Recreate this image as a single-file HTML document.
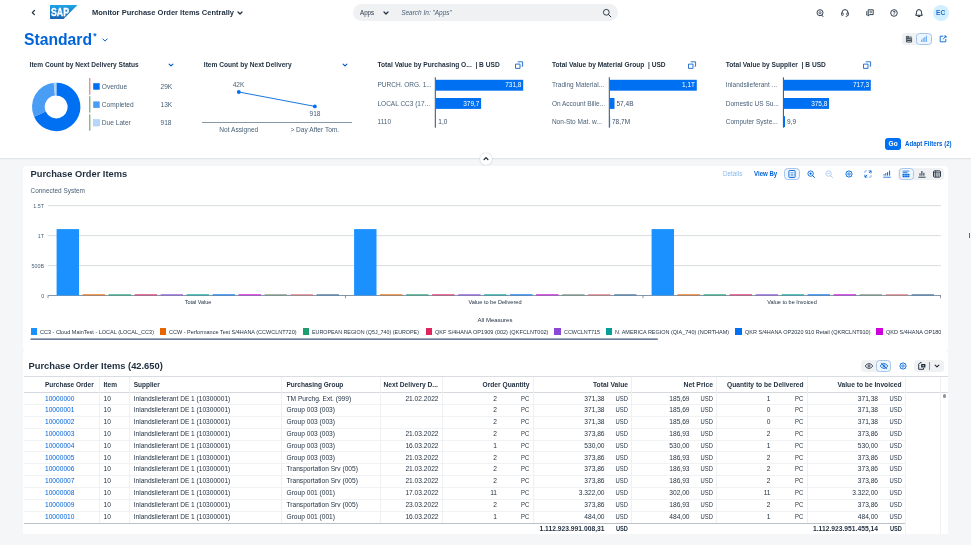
<!DOCTYPE html>
<html lang="en"><head><meta charset="utf-8"><title>Monitor Purchase Order Items Centrally</title>
<style>
*{box-sizing:border-box;margin:0;padding:0}
html,body{width:971px;height:545px;overflow:hidden;background:#f5f6f7;font-family:"Liberation Sans",sans-serif;color:#1d2d3e}
body{position:relative}
.a{position:absolute;white-space:nowrap;line-height:1}
.b{font-weight:bold}
.t{position:absolute;white-space:nowrap;line-height:10px;height:10px;font-size:6.55px}
.r{text-align:right}
.c{text-align:center}
.lnk{color:#0064d9}
.gry{color:#4a6178}
svg{position:absolute;overflow:visible}
.vl{position:absolute;width:1px;background:#e5e5e5}
.hl{position:absolute;height:1px;background:#e5e5e5}
#root{position:absolute;left:0;top:0;width:971px;height:545px;overflow:hidden;will-change:transform}
</style></head><body><div id="root">

<div class="a" style="left:0;top:0;width:971px;height:158px;background:#fff"></div>
<div class="a" style="left:0;top:158px;width:971px;height:1px;background:#e3e6e9"></div>
<div class="a" style="left:0;top:159px;width:971px;height:1px;background:#eef0f2"></div>
<svg style="left:29px;top:8px" width="8" height="9" viewBox="0 0 8 9"><path d="M5.4 2.5L3.3 4.6L5.4 6.7" fill="none" stroke="#1d2d3e" stroke-width="1.2" stroke-linecap="round" stroke-linejoin="round"/></svg>
<div class="a" style="left:49.5px;top:5px;width:28px;height:14px;background:linear-gradient(#1ea4e8,#1a62b3);clip-path:polygon(0 0,100% 0,50% 100%,0 100%)"><div class="a b" style="left:1px;top:0px;height:14px;line-height:14px;font-size:11px;color:#fff;-webkit-text-stroke:0.3px #fff;transform:scaleX(0.796);transform-origin:0 50%">SAP</div></div>
<div class="a b" style="left:92px;top:7.10px;height:12px;line-height:12px;font-size:7.52px;">Monitor Purchase Order Items Centrally</div>
<svg style="left:236px;top:8.9px" width="8" height="8" viewBox="-4 -4 8 8"><path d="M-2.0 -1.0L0 1.0L2.0 -1.0" fill="none" stroke="#1d2d3e" stroke-width="1.2" stroke-linecap="round" stroke-linejoin="round"/></svg>
<div class="a" style="left:353px;top:3.6px;width:265px;height:17.6px;border-radius:9px;background:#eff1f2"></div>
<div class="a " style="left:360.4px;top:6.90px;height:12px;line-height:12px;font-size:6.90px;transform:scaleX(0.903);transform-origin:0 50%;color:#1d2d3e">Apps</div>
<svg style="left:381.7px;top:8.7px" width="8" height="8" viewBox="-4 -4 8 8"><path d="M-2.0 -1.0L0 1.0L2.0 -1.0" fill="none" stroke="#1d2d3e" stroke-width="1.2" stroke-linecap="round" stroke-linejoin="round"/></svg>
<div class="a " style="left:401.2px;top:6.90px;height:12px;line-height:12px;font-size:6.47px;font-style:italic;color:#4a6178">Search In: "Apps"</div>
<svg style="left:602px;top:7.5px" width="10" height="10" viewBox="0 0 10 10"><circle cx="4.3" cy="4.3" r="2.9" fill="none" stroke="#1d2d3e" stroke-width="0.9"/><path d="M6.5 6.5L8.8 8.8" stroke="#1d2d3e" stroke-width="1" stroke-linecap="round"/></svg>
<svg style="left:815.4px;top:7.699999999999999px" width="10" height="10" viewBox="-5 -5 10 10"><circle cx="0" cy="-0.3" r="3" fill="none" stroke="#1d2d3e" stroke-width="0.9"/><circle cx="0" cy="-0.3" r="1.1" fill="none" stroke="#1d2d3e" stroke-width="0.7"/><path d="M1.8 2.2L3 3.6" stroke="#1d2d3e" stroke-width="0.9" stroke-linecap="round"/></svg>
<svg style="left:840.0px;top:7.699999999999999px" width="10" height="10" viewBox="-5 -5 10 10"><path d="M-3 0.6V-0.4A3 3 0 0 1 3 -0.4V0.6" fill="none" stroke="#1d2d3e" stroke-width="0.9"/><rect x="-3.5" y="-0.2" width="1.7" height="2.6" rx="0.6" fill="none" stroke="#1d2d3e" stroke-width="0.8"/><rect x="1.8" y="-0.2" width="1.7" height="2.6" rx="0.6" fill="none" stroke="#1d2d3e" stroke-width="0.8"/><path d="M2.8 2.4Q2.6 3.6 0.6 3.6" fill="none" stroke="#1d2d3e" stroke-width="0.7"/></svg>
<svg style="left:864.8px;top:7.699999999999999px" width="10" height="10" viewBox="-5 -5 10 10"><path d="M-1.8 -3.2H3.2V1.6H-0.2L-1.8 3V-3.2Z" fill="none" stroke="#1d2d3e" stroke-width="0.9" stroke-linejoin="round"/><path d="M-3.3 -1.8V2.2H-2.6" fill="none" stroke="#1d2d3e" stroke-width="0.8"/><circle cx="0.7" cy="-1" r="0.9" fill="none" stroke="#1d2d3e" stroke-width="0.6"/></svg>
<svg style="left:889.4px;top:7.699999999999999px" width="10" height="10" viewBox="-5 -5 10 10"><circle cx="0" cy="0" r="3.3" fill="none" stroke="#1d2d3e" stroke-width="0.9"/><text x="0" y="1.9" text-anchor="middle" font-family="Liberation Sans, sans-serif" font-weight="bold" font-size="5.2" fill="#1d2d3e">?</text></svg>
<svg style="left:914.0px;top:7.5px" width="10" height="10" viewBox="-5 -5 10 10"><path d="M-3.3 2.3H3.3C2.6 1.5 2.5 0.6 2.5 -0.8A2.5 2.6 0 0 0 -2.5 -0.8C-2.5 0.6 -2.6 1.5 -3.3 2.3Z" fill="none" stroke="#1d2d3e" stroke-width="1" stroke-linejoin="round"/><path d="M-0.9 3.5H0.9" stroke="#1d2d3e" stroke-width="0.9" stroke-linecap="round"/></svg>
<div class="a b" style="left:932.8px;top:4.8px;width:15.8px;height:15.8px;border-radius:50%;background:#d1efff;color:#1f6fd0;font-size:6.6px;line-height:15.8px;text-align:center">EC</div>
<div class="a b" style="left:24px;top:33.50px;height:12px;line-height:12px;font-size:15.69px;color:#0064d9;height:20px;line-height:20px;top:30.4px">Standard</div>
<div class="a b" style="left:93.3px;top:32.2px;font-size:8.5px;color:#0064d9">*</div>
<svg style="left:101.3px;top:36px" width="8" height="8" viewBox="-4 -4 8 8"><path d="M-2.2 -1.1L0 1.1L2.2 -1.1" fill="none" stroke="#0064d9" stroke-width="1" stroke-linecap="round" stroke-linejoin="round"/></svg>
<div class="a" style="left:901.8px;top:32.6px;width:15px;height:12.2px;border-radius:3px 0 0 3px;background:#eff1f2"></div>
<div class="a" style="left:916.2px;top:32.6px;width:15.6px;height:12.2px;border-radius:3.5px;background:#edf5ff;border:1px solid #a3c3ea"></div>
<svg style="left:904.0px;top:33.7px" width="10" height="10" viewBox="-5 -5 10 10"><path d="M-2.6 -2.6H-0.4V-1.2H-2.6ZM-2.6 -0.6H2.6V0.9H-2.6ZM-2.6 1.5H2.6V3H-2.6Z" fill="none" stroke="#1d2d3e" stroke-width="0.8"/><path d="M0.2 -1.9H2.8" stroke="#1d2d3e" stroke-width="0.8"/></svg>
<svg style="left:919.0px;top:33.9px" width="10" height="10" viewBox="-5 -5 10 10"><path d="M-2.4 2.6V1M-0.8 2.6V-0.6M0.8 2.6V-1.6M2.4 2.6V-2.8" stroke="#5aa0ee" stroke-width="0.9" stroke-linecap="round"/></svg>
<svg style="left:937.5px;top:33.6px" width="10" height="10" viewBox="-5 -5 10 10"><path d="M0.4 -2.8H-2.8V2.8H2.8V0" fill="none" stroke="#0064d9" stroke-width="0.9" stroke-linejoin="round"/><path d="M0 0.4L2.9 -2.9M1.2 -3H3V-1.2" fill="none" stroke="#0064d9" stroke-width="0.9" stroke-linejoin="round"/></svg>
<div class="a b" style="left:29.6px;top:58.50px;height:12px;line-height:12px;font-size:6.57px;">Item Count by Next Delivery Status</div>
<svg style="left:167px;top:60.5px" width="8" height="8" viewBox="-4 -4 8 8"><path d="M-1.9 -0.95L0 0.95L1.9 -0.95" fill="none" stroke="#0057c2" stroke-width="1.1" stroke-linecap="round" stroke-linejoin="round"/></svg>
<div class="a b" style="left:203.8px;top:58.50px;height:12px;line-height:12px;font-size:6.62px;">Item Count by Next Delivery</div>
<svg style="left:341px;top:60.5px" width="8" height="8" viewBox="-4 -4 8 8"><path d="M-1.9 -0.95L0 0.95L1.9 -0.95" fill="none" stroke="#0057c2" stroke-width="1.1" stroke-linecap="round" stroke-linejoin="round"/></svg>
<svg style="left:0;top:0" width="971" height="160" viewBox="0 0 971 160">
<path d="M56.20 82.70A24.2 24.2 0 1 1 34.09 116.74L45.69 111.58A11.5 11.5 0 1 0 56.20 95.40Z" fill="#0070f2"/>
<path d="M34.09 116.74A24.2 24.2 0 0 1 53.67 82.83L55.00 95.46A11.5 11.5 0 0 0 45.69 111.58Z" fill="#4a9df5"/>
<path d="M53.67 82.83A24.2 24.2 0 0 1 56.20 82.70L56.20 95.40A11.5 11.5 0 0 0 55.00 95.46Z" fill="#a6cffb"/>
<path d="M56.2 95.4V82.7" stroke="#fff" stroke-width="0.4"/>
<rect x="89.3" y="78" width="1" height="16.8" fill="#e2636f"/>
<rect x="89.3" y="96.2" width="1" height="16.4" fill="#4f9d59"/>
<rect x="89.3" y="114.3" width="1" height="16.4" fill="#4f9d59"/>
<rect x="93.2" y="83.2" width="6.5" height="6.5" fill="#0070f2"/>
<rect x="93.2" y="101.4" width="6.5" height="6.5" fill="#4a9df5"/>
<rect x="93.2" y="119.5" width="6.5" height="6.5" fill="#b5d7fb" stroke="#8fc2f7" stroke-width="0.4"/>
<path d="M238.8 92L314.8 106.4" stroke="#0064d9" stroke-width="0.9" fill="none"/>
<circle cx="238.8" cy="92" r="1.9" fill="#0070f2"/><circle cx="314.8" cy="106.4" r="1.9" fill="#0070f2"/>
<rect x="202" y="122.2" width="150" height="0.8" fill="#6a7d91"/>
<rect x="434.8" y="77.3" width="1" height="50.4" fill="#3b4f66"/>
<rect x="435.8" y="79.8" width="87.4" height="10.9" fill="#0070f2"/>
<rect x="435.8" y="98" width="45.3" height="10.9" fill="#0070f2"/>
<rect x="435.8" y="116.2" width="0.2" height="10.9" fill="#0070f2"/>
<rect x="608.8" y="77.3" width="1" height="50.4" fill="#3b4f66"/>
<rect x="609.8" y="79.8" width="87.0" height="10.9" fill="#0070f2"/>
<rect x="609.8" y="98" width="4.7" height="10.9" fill="#0070f2"/>
<rect x="609.8" y="116.2" width="0.3" height="10.9" fill="#0070f2"/>
<rect x="782.9" y="77.3" width="1" height="50.4" fill="#3b4f66"/>
<rect x="783.9" y="79.8" width="86.9" height="10.9" fill="#0070f2"/>
<rect x="783.9" y="98" width="45.1" height="10.9" fill="#0070f2"/>
<rect x="783.9" y="116.2" width="1.1" height="10.9" fill="#0070f2"/>
</svg>
<div class="a gry" style="left:101.8px;top:80.60px;height:12px;line-height:12px;font-size:6.60px;">Overdue</div>
<div class="a gry" style="left:160.5px;top:80.60px;height:12px;line-height:12px;font-size:6.60px;">29K</div>
<div class="a gry" style="left:101.8px;top:98.70px;height:12px;line-height:12px;font-size:6.60px;">Completed</div>
<div class="a gry" style="left:160.5px;top:98.70px;height:12px;line-height:12px;font-size:6.60px;">13K</div>
<div class="a gry" style="left:101.8px;top:116.80px;height:12px;line-height:12px;font-size:6.60px;">Due Later</div>
<div class="a gry" style="left:160.5px;top:116.80px;height:12px;line-height:12px;font-size:6.60px;">918</div>
<div class="a gry" style="left:138.5px;width:200px;top:78.70px;height:12px;line-height:12px;font-size:6.60px;text-align:center;">42K</div>
<div class="a gry" style="left:215px;width:200px;top:108.40px;height:12px;line-height:12px;font-size:6.60px;text-align:center;">918</div>
<div class="a gry" style="left:138.8px;width:200px;top:123.60px;height:12px;line-height:12px;font-size:6.60px;text-align:center;">Not Assigned</div>
<div class="a gry" style="left:214.8px;width:200px;top:123.60px;height:12px;line-height:12px;font-size:6.60px;text-align:center;">&gt; Day After Tom.</div>
<div class="a b" style="left:377.5px;top:58.50px;height:12px;line-height:12px;font-size:6.62px;">Total Value by Purchasing O...&nbsp; | B USD</div>
<svg style="left:513.6px;top:59.599999999999994px" width="10" height="10" viewBox="-5 -5 10 10"><path d="M-3.5 -0.9H1V3.4H-3.5Z" fill="none" stroke="#0a5cc4" stroke-width="0.85" stroke-linejoin="round"/><path d="M-1.3 -3.2H3.6V1.2H2.6" fill="none" stroke="#0a5cc4" stroke-width="0.85" stroke-linejoin="round"/></svg>
<div class="a b" style="left:551.9px;top:58.50px;height:12px;line-height:12px;font-size:6.62px;">Total Value by Material Group&nbsp; | USD</div>
<svg style="left:687.0px;top:59.599999999999994px" width="10" height="10" viewBox="-5 -5 10 10"><path d="M-3.5 -0.9H1V3.4H-3.5Z" fill="none" stroke="#0a5cc4" stroke-width="0.85" stroke-linejoin="round"/><path d="M-1.3 -3.2H3.6V1.2H2.6" fill="none" stroke="#0a5cc4" stroke-width="0.85" stroke-linejoin="round"/></svg>
<div class="a b" style="left:725.7px;top:58.50px;height:12px;line-height:12px;font-size:6.62px;">Total Value by Supplier&nbsp; | B USD</div>
<svg style="left:861.6px;top:59.599999999999994px" width="10" height="10" viewBox="-5 -5 10 10"><path d="M-3.5 -0.9H1V3.4H-3.5Z" fill="none" stroke="#0a5cc4" stroke-width="0.85" stroke-linejoin="round"/><path d="M-1.3 -3.2H3.6V1.2H2.6" fill="none" stroke="#0a5cc4" stroke-width="0.85" stroke-linejoin="round"/></svg>
<div class="a gry" style="left:377.5px;top:79.30px;height:12px;line-height:12px;font-size:6.50px;">PURCH. ORG. 1...</div>
<div class="a gry" style="left:377.5px;top:97.50px;height:12px;line-height:12px;font-size:6.50px;">LOCAL CC3 (17...</div>
<div class="a gry" style="left:377.5px;top:115.70px;height:12px;line-height:12px;font-size:6.50px;">1110</div>
<div class="a gry" style="left:551.9px;top:79.30px;height:12px;line-height:12px;font-size:6.50px;">Trading Material...</div>
<div class="a gry" style="left:551.9px;top:97.50px;height:12px;line-height:12px;font-size:6.50px;">On Account Bille...</div>
<div class="a gry" style="left:551.9px;top:115.70px;height:12px;line-height:12px;font-size:6.50px;">Non-Sto Mat. w...</div>
<div class="a gry" style="left:725.7px;top:79.30px;height:12px;line-height:12px;font-size:6.50px;">Inlandslieferant ...</div>
<div class="a gry" style="left:725.7px;top:97.50px;height:12px;line-height:12px;font-size:6.50px;">Domestic US Su...</div>
<div class="a gry" style="left:725.7px;top:115.70px;height:12px;line-height:12px;font-size:6.50px;">Computer Syste...</div>
<div class="a " style="right:449.5px;top:79.30px;height:12px;line-height:12px;font-size:6.50px;text-align:right;color:#fff">731,8</div>
<div class="a " style="right:491.5px;top:97.50px;height:12px;line-height:12px;font-size:6.50px;text-align:right;color:#fff">379,7</div>
<div class="a " style="left:438.3px;top:115.70px;height:12px;line-height:12px;font-size:6.50px;color:#3b4f66">1,0</div>
<div class="a " style="right:276px;top:79.30px;height:12px;line-height:12px;font-size:6.50px;text-align:right;color:#fff">1,1T</div>
<div class="a " style="left:616.5px;top:97.50px;height:12px;line-height:12px;font-size:6.50px;color:#3b4f66">57,4B</div>
<div class="a " style="left:612px;top:115.70px;height:12px;line-height:12px;font-size:6.50px;color:#3b4f66">78,7M</div>
<div class="a " style="right:101.79999999999995px;top:79.30px;height:12px;line-height:12px;font-size:6.50px;text-align:right;color:#fff">717,3</div>
<div class="a " style="right:143.60000000000002px;top:97.50px;height:12px;line-height:12px;font-size:6.50px;text-align:right;color:#fff">375,8</div>
<div class="a " style="left:787px;top:115.70px;height:12px;line-height:12px;font-size:6.50px;color:#3b4f66">9,9</div>
<div class="a b" style="left:885px;top:138.1px;width:16.4px;height:11.6px;border-radius:3px;background:#0070f2;color:#fff;font-size:6.6px;line-height:11.8px;text-align:center">Go</div>
<div class="a  b" style="left:905px;top:138.20px;height:12px;line-height:12px;font-size:6.80px;transform:scaleX(0.902);transform-origin:0 50%;color:#0064d9">Adapt Filters (2)</div>
<div class="a" style="left:479.5px;top:152.6px;width:12px;height:12px;border-radius:50%;background:#fff;box-shadow:0 0 1.5px rgba(34,54,73,.35)"></div>
<svg style="left:481.5px;top:154.6px" width="8" height="8" viewBox="-4 -4 8 8"><path d="M-1.9 0.5L0 -1.4L1.9 0.5" fill="none" stroke="#1d2d3e" stroke-width="1.25" stroke-linecap="round" stroke-linejoin="round"/></svg>
<div class="a" style="left:22.7px;top:166.4px;width:925.5px;height:186px;border-radius:4px;background:#fff"></div>
<div class="a" style="left:22.7px;top:352.3px;width:925.5px;height:182px;border-radius:2px 2px 0 0;background:#fff"></div>
<div class="a b" style="left:30.5px;top:168.00px;height:12px;line-height:12px;font-size:9.31px;">Purchase Order Items</div>
<div class="a gry" style="left:30.5px;top:185.00px;height:12px;line-height:12px;font-size:6.45px;">Connected System</div>
<div class="a " style="left:722.9px;top:168.00px;height:12px;line-height:12px;font-size:6.80px;transform:scaleX(0.929);transform-origin:0 50%;color:#86b7ee">Details</div>
<div class="a  b" style="left:753.8px;top:168.00px;height:12px;line-height:12px;font-size:6.80px;transform:scaleX(0.894);transform-origin:0 50%;color:#0064d9">View By</div>
<div class="a" style="left:784.4px;top:167.8px;width:15.4px;height:12.2px;border-radius:3.5px;background:#edf5ff;border:1px solid #a9c6ea"></div>
<svg style="left:787.4px;top:168.9px" width="10" height="10" viewBox="-5 -5 10 10"><rect x="-3.1" y="-3.5" width="6.2" height="7" rx="0.9" fill="none" stroke="#0064d9" stroke-width="0.9"/><path d="M-1.4 -1.3H1.4M-1.4 0.3H1.4M-1.4 1.8H1.4" stroke="#0064d9" stroke-width="0.55"/></svg>
<svg style="left:805.9px;top:168.8px" width="10" height="10" viewBox="-5 -5 10 10"><circle cx="-0.4" cy="-0.4" r="2.7" fill="none" stroke="#0064d9" stroke-width="0.9"/><path d="M1.7 1.7L3.5 3.5" stroke="#0064d9" stroke-width="1" stroke-linecap="round"/><path d="M-1.8 -0.4H1M-0.4 -1.8V1" stroke="#0064d9" stroke-width="0.75"/></svg>
<svg style="left:824.2px;top:168.8px" width="10" height="10" viewBox="-5 -5 10 10"><circle cx="-0.4" cy="-0.4" r="2.7" fill="none" stroke="#a9c9f0" stroke-width="0.9"/><path d="M1.7 1.7L3.5 3.5" stroke="#a9c9f0" stroke-width="1" stroke-linecap="round"/><path d="M-1.8 -0.4H1" stroke="#a9c9f0" stroke-width="0.75"/></svg>
<svg style="left:844.3px;top:169.0px" width="10" height="10" viewBox="-5 -5 10 10"><path d="M0.00 -3.40L1.03 -2.49L2.40 -2.40L2.49 -1.03L3.40 0.00L2.49 1.03L2.40 2.40L1.03 2.49L0.00 3.40L-1.03 2.49L-2.40 2.40L-2.49 1.03L-3.40 0.00L-2.49 -1.03L-2.40 -2.40L-1.03 -2.49Z" fill="none" stroke="#0064d9" stroke-width="0.9" stroke-linejoin="round"/><circle cx="0" cy="0" r="1.2" fill="none" stroke="#0064d9" stroke-width="0.8"/></svg>
<svg style="left:862.6px;top:168.7px" width="10" height="10" viewBox="-5 -5 10 10"><path d="M0.6 -3.1H3.1V-0.6M3.1 -3.1L0.9 -0.9M-0.6 3.1H-3.1V0.6M-3.1 3.1L-0.9 0.9" fill="none" stroke="#0064d9" stroke-width="0.85" stroke-linejoin="round"/><path d="M-3.1 -1V-3.1H-1M3.1 1V3.1H1" fill="none" stroke="#7aa9e6" stroke-width="0.8"/></svg>
<svg style="left:882.0px;top:169.0px" width="10" height="10" viewBox="-5 -5 10 10"><path d="M-3 1.6V0.2M-1.2 1.6V-0.9M0.6 1.6V-1.8M2.6 1.6V-3.3" stroke="#0064d9" stroke-width="1"/><path d="M-3.8 3.2H3.8" stroke="#0064d9" stroke-width="0.8"/></svg>
<div class="a" style="left:898.4px;top:167.8px;width:45.4px;height:12.2px;border-radius:3.5px;background:#f0f1f3"></div>
<div class="a" style="left:898.5px;top:167.8px;width:15px;height:12.2px;border-radius:3.5px;background:#edf5ff;border:1px solid #a9c6ea"></div>
<svg style="left:901.2px;top:168.7px" width="10" height="10" viewBox="-5 -5 10 10"><path d="M-3.4 -2.9H3.4M-3.4 -1.6H1.5" stroke="#0064d9" stroke-width="0.7"/><rect x="-3.4" y="-0.3" width="6.8" height="3.6" rx="0.5" fill="#0064d9"/><path d="M-3.4 1.5H3.4M-1.2 -0.3V3.3M1.2 -0.3V3.3" stroke="#cfe3fb" stroke-width="0.45"/></svg>
<svg style="left:916.5px;top:169.0px" width="10" height="10" viewBox="-5 -5 10 10"><path d="M-2 1.7V-0.6M-0.1 1.7V-3M1.9 1.7V-1.2" stroke="#1d2d3e" stroke-width="1"/><path d="M-3.6 3.2H3.6" stroke="#1d2d3e" stroke-width="0.9"/></svg>
<svg style="left:932.0px;top:169.1px" width="10" height="10" viewBox="-5 -5 10 10"><rect x="-3.4" y="-3.1" width="6.8" height="6.2" rx="0.8" fill="none" stroke="#1d2d3e" stroke-width="1"/><path d="M-3.4 -1.2H3.4M-1.3 -3.1V3.1" stroke="#1d2d3e" stroke-width="0.8"/><path d="M-3.4 1H3.4M1.1 -1.2V3.1" stroke="#1d2d3e" stroke-width="0.45"/></svg>
<svg style="left:0;top:160px" width="971" height="190" viewBox="0 160 971 190">
<rect x="48" y="205.29999999999998" width="893" height="0.8" fill="#cdd3d8"/>
<rect x="48" y="235.29999999999998" width="893" height="0.8" fill="#cdd3d8"/>
<rect x="48" y="265.3" width="893" height="0.8" fill="#cdd3d8"/>
<rect x="48" y="295.2" width="893" height="0.8" fill="#6a7d91"/>
<rect x="47.6" y="295.2" width="0.8" height="3" fill="#6a7d91"/>
<rect x="345.1" y="295.2" width="0.8" height="3" fill="#6a7d91"/>
<rect x="642.6" y="295.2" width="0.8" height="3" fill="#6a7d91"/>
<rect x="940.1" y="295.2" width="0.8" height="3" fill="#6a7d91"/>
<rect x="56.6" y="229.1" width="22.4" height="66.3" fill="#1b90ff"/>
<rect x="82.6" y="294.2" width="22.4" height="1.2" fill="#e76500" opacity="0.8"/>
<rect x="108.6" y="294.2" width="22.4" height="1.2" fill="#1e9d71" opacity="0.8"/>
<rect x="134.6" y="294.2" width="22.4" height="1.2" fill="#e0245e" opacity="0.8"/>
<rect x="160.6" y="294.2" width="22.4" height="1.2" fill="#8b47d7" opacity="0.8"/>
<rect x="186.6" y="294.2" width="22.4" height="1.2" fill="#049f9a" opacity="0.8"/>
<rect x="212.6" y="294.2" width="22.4" height="1.2" fill="#0070f2" opacity="0.8"/>
<rect x="238.6" y="294.2" width="22.4" height="1.2" fill="#cc00dc" opacity="0.8"/>
<rect x="264.6" y="294.2" width="22.4" height="1.2" fill="#798c77" opacity="0.8"/>
<rect x="290.6" y="294.2" width="22.4" height="1.2" fill="#da6c6c" opacity="0.8"/>
<rect x="316.6" y="294.2" width="22.4" height="1.2" fill="#3c6e9f" opacity="0.8"/>
<rect x="354.1" y="229.1" width="22.4" height="66.3" fill="#1b90ff"/>
<rect x="380.1" y="294.2" width="22.4" height="1.2" fill="#e76500" opacity="0.8"/>
<rect x="406.1" y="294.2" width="22.4" height="1.2" fill="#1e9d71" opacity="0.8"/>
<rect x="432.1" y="294.2" width="22.4" height="1.2" fill="#e0245e" opacity="0.8"/>
<rect x="458.1" y="294.2" width="22.4" height="1.2" fill="#8b47d7" opacity="0.8"/>
<rect x="484.1" y="294.2" width="22.4" height="1.2" fill="#049f9a" opacity="0.8"/>
<rect x="510.1" y="294.2" width="22.4" height="1.2" fill="#0070f2" opacity="0.8"/>
<rect x="536.1" y="294.2" width="22.4" height="1.2" fill="#cc00dc" opacity="0.8"/>
<rect x="562.1" y="294.2" width="22.4" height="1.2" fill="#798c77" opacity="0.8"/>
<rect x="588.1" y="294.2" width="22.4" height="1.2" fill="#da6c6c" opacity="0.8"/>
<rect x="614.1" y="294.2" width="22.4" height="1.2" fill="#3c6e9f" opacity="0.8"/>
<rect x="651.6" y="229.1" width="22.4" height="66.3" fill="#1b90ff"/>
<rect x="677.6" y="294.2" width="22.4" height="1.2" fill="#e76500" opacity="0.8"/>
<rect x="703.6" y="294.2" width="22.4" height="1.2" fill="#1e9d71" opacity="0.8"/>
<rect x="729.6" y="294.2" width="22.4" height="1.2" fill="#e0245e" opacity="0.8"/>
<rect x="755.6" y="294.2" width="22.4" height="1.2" fill="#8b47d7" opacity="0.8"/>
<rect x="781.6" y="294.2" width="22.4" height="1.2" fill="#049f9a" opacity="0.8"/>
<rect x="807.6" y="294.2" width="22.4" height="1.2" fill="#0070f2" opacity="0.8"/>
<rect x="833.6" y="294.2" width="22.4" height="1.2" fill="#cc00dc" opacity="0.8"/>
<rect x="859.6" y="294.2" width="22.4" height="1.2" fill="#798c77" opacity="0.8"/>
<rect x="885.6" y="294.2" width="22.4" height="1.2" fill="#da6c6c" opacity="0.8"/>
<rect x="911.6" y="294.2" width="22.4" height="1.2" fill="#3c6e9f" opacity="0.8"/>
<rect x="30.5" y="338.4" width="627.3" height="1.5" fill="#5b738b"/>
</svg>
<div class="a gry" style="right:927.1px;top:200.10px;height:12px;line-height:12px;font-size:6.00px;text-align:right;transform:scaleX(0.890);transform-origin:100% 50%;">1.5T</div>
<div class="a gry" style="right:927.1px;top:230.10px;height:12px;line-height:12px;font-size:6.00px;text-align:right;transform:scaleX(0.890);transform-origin:100% 50%;">1T</div>
<div class="a gry" style="right:927.1px;top:260.10px;height:12px;line-height:12px;font-size:6.00px;text-align:right;transform:scaleX(0.890);transform-origin:100% 50%;">500B</div>
<div class="a gry" style="right:927.1px;top:290.00px;height:12px;line-height:12px;font-size:6.00px;text-align:right;transform:scaleX(0.890);transform-origin:100% 50%;">0</div>
<div class="a " style="left:97.6px;width:200px;top:296.30px;height:12px;line-height:12px;font-size:6.00px;text-align:center;transform:scaleX(0.913);transform-origin:50% 50%;color:#1d2d3e">Total Value</div>
<div class="a " style="left:394.8px;width:200px;top:296.30px;height:12px;line-height:12px;font-size:6.00px;text-align:center;transform:scaleX(0.933);transform-origin:50% 50%;color:#1d2d3e">Value to be Delivered</div>
<div class="a " style="left:692.2px;width:200px;top:296.30px;height:12px;line-height:12px;font-size:6.00px;text-align:center;transform:scaleX(0.918);transform-origin:50% 50%;color:#1d2d3e">Value to be Invoiced</div>
<div class="a " style="left:394.5px;width:200px;top:314.20px;height:12px;line-height:12px;font-size:6.00px;text-align:center;transform:scaleX(1.006);transform-origin:50% 50%;color:#1d2d3e">All Measures</div>
<div class="a" style="left:30px;top:326px;width:911px;height:12px;overflow:hidden">
<div class="a" style="left:0.5px;top:2.4px;width:6.5px;height:6.6px;background:#1b90ff"></div>
<div class="a" style="left:9.5px;top:0;height:12px;line-height:12px;font-size:6px;transform:scaleX(0.918);transform-origin:0 50%;color:#1d2d3e">CC3 - Cloud MainTest - LOCAL (LOCAL_CC3)</div>
<div class="a" style="left:129.5px;top:2.4px;width:6.5px;height:6.6px;background:#e76500"></div>
<div class="a" style="left:139px;top:0;height:12px;line-height:12px;font-size:6px;transform:scaleX(0.916);transform-origin:0 50%;color:#1d2d3e">CCW - Performance Test S/4HANA (CCWCLNT720)</div>
<div class="a" style="left:272.5px;top:2.4px;width:6.5px;height:6.6px;background:#1e9d71"></div>
<div class="a" style="left:282px;top:0;height:12px;line-height:12px;font-size:6px;transform:scaleX(0.891);transform-origin:0 50%;color:#1d2d3e">EUROPEAN REGION (Q5J_740) (EUROPE)</div>
<div class="a" style="left:395.5px;top:2.4px;width:6.5px;height:6.6px;background:#e0245e"></div>
<div class="a" style="left:404.5px;top:0;height:12px;line-height:12px;font-size:6px;transform:scaleX(0.927);transform-origin:0 50%;color:#1d2d3e">QKF S/4HANA OP1909 (002) (QKFCLNT002)</div>
<div class="a" style="left:524px;top:2.4px;width:6.5px;height:6.6px;background:#8b47d7"></div>
<div class="a" style="left:533.5px;top:0;height:12px;line-height:12px;font-size:6px;transform:scaleX(0.900);transform-origin:0 50%;color:#1d2d3e">CCWCLNT715</div>
<div class="a" style="left:575.5px;top:2.4px;width:6.5px;height:6.6px;background:#049f9a"></div>
<div class="a" style="left:585px;top:0;height:12px;line-height:12px;font-size:6px;transform:scaleX(0.913);transform-origin:0 50%;color:#1d2d3e">N. AMERICA REGION (QIA_740) (NORTHAM)</div>
<div class="a" style="left:705px;top:2.4px;width:6.5px;height:6.6px;background:#0070f2"></div>
<div class="a" style="left:714.5px;top:0;height:12px;line-height:12px;font-size:6px;transform:scaleX(0.918);transform-origin:0 50%;color:#1d2d3e">QKR S/4HANA OP2020 910 Retail (QKRCLNT910)</div>
<div class="a" style="left:846px;top:2.4px;width:6.5px;height:6.6px;background:#cc00dc"></div>
<div class="a" style="left:855.5px;top:0;height:12px;line-height:12px;font-size:6px;transform:scaleX(0.918);transform-origin:0 50%;color:#1d2d3e">QKD S/4HANA OP1809 910 Retail (QKDCLNT910)</div>
</div>
<div class="a b" style="left:28.5px;top:360.20px;height:12px;line-height:12px;font-size:9.34px;">Purchase Order Items (42.650)</div>
<div class="a" style="left:861.3px;top:360px;width:30.2px;height:11.8px;border-radius:3.5px;background:#f0f1f3"></div>
<div class="a" style="left:876.2px;top:360px;width:15.3px;height:11.8px;border-radius:3.5px;background:#edf5ff;border:1px solid #a9c6ea"></div>
<svg style="left:863.6px;top:361.1px" width="10" height="10" viewBox="-5 -5 10 10"><path d="M-3.9 0Q0 -4.9 3.9 0Q0 4.9 -3.9 0Z" fill="none" stroke="#1d2d3e" stroke-width="0.85"/><circle cx="0" cy="0" r="1.05" fill="none" stroke="#1d2d3e" stroke-width="0.8"/></svg>
<svg style="left:878.8px;top:361.1px" width="10" height="10" viewBox="-5 -5 10 10"><path d="M-3.9 0Q0 -4.9 3.9 0Q0 4.9 -3.9 0Z" fill="none" stroke="#0064d9" stroke-width="0.85"/><circle cx="0" cy="0" r="1.05" fill="none" stroke="#0064d9" stroke-width="0.8"/><path d="M-2.9 -3.1L2.9 3.1" stroke="#0064d9" stroke-width="0.9"/></svg>
<svg style="left:897.6px;top:361.1px" width="10" height="10" viewBox="-5 -5 10 10"><path d="M0.00 -3.40L1.03 -2.49L2.40 -2.40L2.49 -1.03L3.40 0.00L2.49 1.03L2.40 2.40L1.03 2.49L0.00 3.40L-1.03 2.49L-2.40 2.40L-2.49 1.03L-3.40 0.00L-2.49 -1.03L-2.40 -2.40L-1.03 -2.49Z" fill="none" stroke="#0064d9" stroke-width="0.9" stroke-linejoin="round"/><circle cx="0" cy="0" r="1.2" fill="none" stroke="#0064d9" stroke-width="0.8"/></svg>
<div class="a" style="left:914.2px;top:360px;width:29.6px;height:11.8px;border-radius:3.5px;background:#f0f1f3"></div>
<div class="a" style="left:928.7px;top:362.2px;width:0.8px;height:7.4px;background:#8c9aaa"></div>
<svg style="left:917.3px;top:361.0px" width="10" height="10" viewBox="-5 -5 10 10"><path d="M-0.4 -3.3H-2L-3.3 -1.8V3.3H1.6V2" fill="none" stroke="#1d2d3e" stroke-width="0.95" stroke-linejoin="round"/><rect x="-0.9" y="-1.9" width="4.3" height="3.4" rx="0.5" fill="#1d2d3e"/><path d="M0 -0.2H1.6M1 -0.9L1.8 -0.2L1 0.5" stroke="#fff" stroke-width="0.5" fill="none"/></svg>
<svg style="left:933px;top:362.2px" width="8" height="8" viewBox="-4 -4 8 8"><path d="M-1.9 -0.95L0 0.95L1.9 -0.95" fill="none" stroke="#1d2d3e" stroke-width="1.1" stroke-linecap="round" stroke-linejoin="round"/></svg>
<div class="hl" style="left:23.5px;top:376px;width:924.0px;background:#d9dde1"></div>
<div class="hl" style="left:23.5px;top:392.3px;width:924.0px;background:#d5d9de"></div>
<div class="hl" style="left:23.5px;top:522.6px;width:881.5px;background:#b9c2cb"></div>
<div class="hl" style="left:23.5px;top:404.12px;width:881.5px;background:#f1f2f4"></div>
<div class="hl" style="left:23.5px;top:415.94px;width:881.5px;background:#f1f2f4"></div>
<div class="hl" style="left:23.5px;top:427.76px;width:881.5px;background:#f1f2f4"></div>
<div class="hl" style="left:23.5px;top:439.58px;width:881.5px;background:#f1f2f4"></div>
<div class="hl" style="left:23.5px;top:451.40px;width:881.5px;background:#f1f2f4"></div>
<div class="hl" style="left:23.5px;top:463.22px;width:881.5px;background:#f1f2f4"></div>
<div class="hl" style="left:23.5px;top:475.04px;width:881.5px;background:#f1f2f4"></div>
<div class="hl" style="left:23.5px;top:486.86px;width:881.5px;background:#f1f2f4"></div>
<div class="hl" style="left:23.5px;top:498.68px;width:881.5px;background:#f1f2f4"></div>
<div class="hl" style="left:23.5px;top:510.50px;width:881.5px;background:#f1f2f4"></div>
<div class="vl" style="left:99.0px;top:376.5px;height:146.10000000000002px;background:#eff0f2"></div>
<div class="vl" style="left:128.5px;top:376.5px;height:146.10000000000002px;background:#eff0f2"></div>
<div class="vl" style="left:280.5px;top:376.5px;height:146.10000000000002px;background:#eff0f2"></div>
<div class="vl" style="left:379.5px;top:376.5px;height:146.10000000000002px;background:#eff0f2"></div>
<div class="vl" style="left:442.0px;top:376.5px;height:146.10000000000002px;background:#eff0f2"></div>
<div class="vl" style="left:532.5px;top:376.5px;height:146.10000000000002px;background:#eff0f2"></div>
<div class="vl" style="left:631.0px;top:376.5px;height:146.10000000000002px;background:#eff0f2"></div>
<div class="vl" style="left:716.0px;top:376.5px;height:146.10000000000002px;background:#eff0f2"></div>
<div class="vl" style="left:806.5px;top:376.5px;height:146.10000000000002px;background:#eff0f2"></div>
<div class="vl" style="left:904.5px;top:376.5px;height:157.5px;background:#eff0f2"></div>
<div class="vl" style="left:939.5px;top:376.5px;height:157.5px;background:#eff0f2"></div>
<div class="a" style="left:942.9px;top:393.6px;width:3.2px;height:4.2px;border-radius:1.6px;background:#8d949c"></div>
<div class="a b" style="left:45px;top:378.50px;height:12px;line-height:12px;font-size:6.49px;">Purchase Order</div>
<div class="a b" style="left:103.5px;top:378.50px;height:12px;line-height:12px;font-size:6.57px;">Item</div>
<div class="a b" style="left:133.7px;top:378.50px;height:12px;line-height:12px;font-size:6.50px;">Supplier</div>
<div class="a b" style="left:286.5px;top:378.50px;height:12px;line-height:12px;font-size:6.53px;">Purchasing Group</div>
<div class="a b" style="left:383.5px;top:378.50px;height:12px;line-height:12px;font-size:6.67px;">Next Delivery D...</div>
<div class="a b" style="right:441.5px;top:378.50px;height:12px;line-height:12px;font-size:6.66px;text-align:right;">Order Quantity</div>
<div class="a b" style="right:343px;top:378.50px;height:12px;line-height:12px;font-size:6.72px;text-align:right;">Total Value</div>
<div class="a b" style="right:258px;top:378.50px;height:12px;line-height:12px;font-size:6.80px;text-align:right;">Net Price</div>
<div class="a b" style="right:167.5px;top:378.50px;height:12px;line-height:12px;font-size:6.65px;text-align:right;">Quantity to be Delivered</div>
<div class="a b" style="right:69.5px;top:378.50px;height:12px;line-height:12px;font-size:6.66px;text-align:right;">Value to be Invoiced</div>
<div class="a lnk" style="left:45px;top:392.51px;height:12px;line-height:12px;font-size:6.62px;">10000000</div>
<div class="a " style="left:103.5px;top:392.51px;height:12px;line-height:12px;font-size:6.62px;">10</div>
<div class="a " style="left:133.7px;top:392.51px;height:12px;line-height:12px;font-size:6.58px;">Inlandslieferant DE 1 (10300001)</div>
<div class="a " style="left:286.5px;top:392.51px;height:12px;line-height:12px;font-size:6.62px;">TM Purchg. Ext. (999)</div>
<div class="a " style="right:532.5px;top:392.51px;height:12px;line-height:12px;font-size:6.62px;text-align:right;">21.02.2022</div>
<div class="a " style="right:474px;top:392.51px;height:12px;line-height:12px;font-size:6.62px;text-align:right;">2</div>
<div class="a " style="right:441.5px;top:392.51px;height:12px;line-height:12px;font-size:6.62px;text-align:right;transform:scaleX(0.885);transform-origin:100% 50%;">PC</div>
<div class="a " style="right:366.5px;top:392.51px;height:12px;line-height:12px;font-size:6.62px;text-align:right;">371,38</div>
<div class="a " style="right:343px;top:392.51px;height:12px;line-height:12px;font-size:6.62px;text-align:right;transform:scaleX(0.885);transform-origin:100% 50%;">USD</div>
<div class="a " style="right:281.5px;top:392.51px;height:12px;line-height:12px;font-size:6.62px;text-align:right;">185,69</div>
<div class="a " style="right:258px;top:392.51px;height:12px;line-height:12px;font-size:6.62px;text-align:right;transform:scaleX(0.885);transform-origin:100% 50%;">USD</div>
<div class="a " style="right:200.5px;top:392.51px;height:12px;line-height:12px;font-size:6.62px;text-align:right;">1</div>
<div class="a " style="right:167.5px;top:392.51px;height:12px;line-height:12px;font-size:6.62px;text-align:right;transform:scaleX(0.885);transform-origin:100% 50%;">PC</div>
<div class="a " style="right:93px;top:392.51px;height:12px;line-height:12px;font-size:6.62px;text-align:right;">371,38</div>
<div class="a " style="right:69.5px;top:392.51px;height:12px;line-height:12px;font-size:6.62px;text-align:right;transform:scaleX(0.885);transform-origin:100% 50%;">USD</div>
<div class="a lnk" style="left:45px;top:404.33px;height:12px;line-height:12px;font-size:6.62px;">10000001</div>
<div class="a " style="left:103.5px;top:404.33px;height:12px;line-height:12px;font-size:6.62px;">10</div>
<div class="a " style="left:133.7px;top:404.33px;height:12px;line-height:12px;font-size:6.58px;">Inlandslieferant DE 1 (10300001)</div>
<div class="a " style="left:286.5px;top:404.33px;height:12px;line-height:12px;font-size:6.62px;">Group 003 (003)</div>
<div class="a " style="right:532.5px;top:404.33px;height:12px;line-height:12px;font-size:6.62px;text-align:right;"></div>
<div class="a " style="right:474px;top:404.33px;height:12px;line-height:12px;font-size:6.62px;text-align:right;">2</div>
<div class="a " style="right:441.5px;top:404.33px;height:12px;line-height:12px;font-size:6.62px;text-align:right;transform:scaleX(0.885);transform-origin:100% 50%;">PC</div>
<div class="a " style="right:366.5px;top:404.33px;height:12px;line-height:12px;font-size:6.62px;text-align:right;">371,38</div>
<div class="a " style="right:343px;top:404.33px;height:12px;line-height:12px;font-size:6.62px;text-align:right;transform:scaleX(0.885);transform-origin:100% 50%;">USD</div>
<div class="a " style="right:281.5px;top:404.33px;height:12px;line-height:12px;font-size:6.62px;text-align:right;">185,69</div>
<div class="a " style="right:258px;top:404.33px;height:12px;line-height:12px;font-size:6.62px;text-align:right;transform:scaleX(0.885);transform-origin:100% 50%;">USD</div>
<div class="a " style="right:200.5px;top:404.33px;height:12px;line-height:12px;font-size:6.62px;text-align:right;">0</div>
<div class="a " style="right:167.5px;top:404.33px;height:12px;line-height:12px;font-size:6.62px;text-align:right;transform:scaleX(0.885);transform-origin:100% 50%;">PC</div>
<div class="a " style="right:93px;top:404.33px;height:12px;line-height:12px;font-size:6.62px;text-align:right;">371,38</div>
<div class="a " style="right:69.5px;top:404.33px;height:12px;line-height:12px;font-size:6.62px;text-align:right;transform:scaleX(0.885);transform-origin:100% 50%;">USD</div>
<div class="a lnk" style="left:45px;top:416.15px;height:12px;line-height:12px;font-size:6.62px;">10000002</div>
<div class="a " style="left:103.5px;top:416.15px;height:12px;line-height:12px;font-size:6.62px;">10</div>
<div class="a " style="left:133.7px;top:416.15px;height:12px;line-height:12px;font-size:6.58px;">Inlandslieferant DE 1 (10300001)</div>
<div class="a " style="left:286.5px;top:416.15px;height:12px;line-height:12px;font-size:6.62px;">Group 003 (003)</div>
<div class="a " style="right:532.5px;top:416.15px;height:12px;line-height:12px;font-size:6.62px;text-align:right;"></div>
<div class="a " style="right:474px;top:416.15px;height:12px;line-height:12px;font-size:6.62px;text-align:right;">2</div>
<div class="a " style="right:441.5px;top:416.15px;height:12px;line-height:12px;font-size:6.62px;text-align:right;transform:scaleX(0.885);transform-origin:100% 50%;">PC</div>
<div class="a " style="right:366.5px;top:416.15px;height:12px;line-height:12px;font-size:6.62px;text-align:right;">371,38</div>
<div class="a " style="right:343px;top:416.15px;height:12px;line-height:12px;font-size:6.62px;text-align:right;transform:scaleX(0.885);transform-origin:100% 50%;">USD</div>
<div class="a " style="right:281.5px;top:416.15px;height:12px;line-height:12px;font-size:6.62px;text-align:right;">185,69</div>
<div class="a " style="right:258px;top:416.15px;height:12px;line-height:12px;font-size:6.62px;text-align:right;transform:scaleX(0.885);transform-origin:100% 50%;">USD</div>
<div class="a " style="right:200.5px;top:416.15px;height:12px;line-height:12px;font-size:6.62px;text-align:right;">0</div>
<div class="a " style="right:167.5px;top:416.15px;height:12px;line-height:12px;font-size:6.62px;text-align:right;transform:scaleX(0.885);transform-origin:100% 50%;">PC</div>
<div class="a " style="right:93px;top:416.15px;height:12px;line-height:12px;font-size:6.62px;text-align:right;">371,38</div>
<div class="a " style="right:69.5px;top:416.15px;height:12px;line-height:12px;font-size:6.62px;text-align:right;transform:scaleX(0.885);transform-origin:100% 50%;">USD</div>
<div class="a lnk" style="left:45px;top:427.97px;height:12px;line-height:12px;font-size:6.62px;">10000003</div>
<div class="a " style="left:103.5px;top:427.97px;height:12px;line-height:12px;font-size:6.62px;">10</div>
<div class="a " style="left:133.7px;top:427.97px;height:12px;line-height:12px;font-size:6.58px;">Inlandslieferant DE 1 (10300001)</div>
<div class="a " style="left:286.5px;top:427.97px;height:12px;line-height:12px;font-size:6.62px;">Group 003 (003)</div>
<div class="a " style="right:532.5px;top:427.97px;height:12px;line-height:12px;font-size:6.62px;text-align:right;">21.03.2022</div>
<div class="a " style="right:474px;top:427.97px;height:12px;line-height:12px;font-size:6.62px;text-align:right;">2</div>
<div class="a " style="right:441.5px;top:427.97px;height:12px;line-height:12px;font-size:6.62px;text-align:right;transform:scaleX(0.885);transform-origin:100% 50%;">PC</div>
<div class="a " style="right:366.5px;top:427.97px;height:12px;line-height:12px;font-size:6.62px;text-align:right;">373,86</div>
<div class="a " style="right:343px;top:427.97px;height:12px;line-height:12px;font-size:6.62px;text-align:right;transform:scaleX(0.885);transform-origin:100% 50%;">USD</div>
<div class="a " style="right:281.5px;top:427.97px;height:12px;line-height:12px;font-size:6.62px;text-align:right;">186,93</div>
<div class="a " style="right:258px;top:427.97px;height:12px;line-height:12px;font-size:6.62px;text-align:right;transform:scaleX(0.885);transform-origin:100% 50%;">USD</div>
<div class="a " style="right:200.5px;top:427.97px;height:12px;line-height:12px;font-size:6.62px;text-align:right;">2</div>
<div class="a " style="right:167.5px;top:427.97px;height:12px;line-height:12px;font-size:6.62px;text-align:right;transform:scaleX(0.885);transform-origin:100% 50%;">PC</div>
<div class="a " style="right:93px;top:427.97px;height:12px;line-height:12px;font-size:6.62px;text-align:right;">373,86</div>
<div class="a " style="right:69.5px;top:427.97px;height:12px;line-height:12px;font-size:6.62px;text-align:right;transform:scaleX(0.885);transform-origin:100% 50%;">USD</div>
<div class="a lnk" style="left:45px;top:439.79px;height:12px;line-height:12px;font-size:6.62px;">10000004</div>
<div class="a " style="left:103.5px;top:439.79px;height:12px;line-height:12px;font-size:6.62px;">10</div>
<div class="a " style="left:133.7px;top:439.79px;height:12px;line-height:12px;font-size:6.58px;">Inlandslieferant DE 1 (10300001)</div>
<div class="a " style="left:286.5px;top:439.79px;height:12px;line-height:12px;font-size:6.62px;">Group 003 (003)</div>
<div class="a " style="right:532.5px;top:439.79px;height:12px;line-height:12px;font-size:6.62px;text-align:right;">16.03.2022</div>
<div class="a " style="right:474px;top:439.79px;height:12px;line-height:12px;font-size:6.62px;text-align:right;">1</div>
<div class="a " style="right:441.5px;top:439.79px;height:12px;line-height:12px;font-size:6.62px;text-align:right;transform:scaleX(0.885);transform-origin:100% 50%;">PC</div>
<div class="a " style="right:366.5px;top:439.79px;height:12px;line-height:12px;font-size:6.62px;text-align:right;">530,00</div>
<div class="a " style="right:343px;top:439.79px;height:12px;line-height:12px;font-size:6.62px;text-align:right;transform:scaleX(0.885);transform-origin:100% 50%;">USD</div>
<div class="a " style="right:281.5px;top:439.79px;height:12px;line-height:12px;font-size:6.62px;text-align:right;">530,00</div>
<div class="a " style="right:258px;top:439.79px;height:12px;line-height:12px;font-size:6.62px;text-align:right;transform:scaleX(0.885);transform-origin:100% 50%;">USD</div>
<div class="a " style="right:200.5px;top:439.79px;height:12px;line-height:12px;font-size:6.62px;text-align:right;">1</div>
<div class="a " style="right:167.5px;top:439.79px;height:12px;line-height:12px;font-size:6.62px;text-align:right;transform:scaleX(0.885);transform-origin:100% 50%;">PC</div>
<div class="a " style="right:93px;top:439.79px;height:12px;line-height:12px;font-size:6.62px;text-align:right;">530,00</div>
<div class="a " style="right:69.5px;top:439.79px;height:12px;line-height:12px;font-size:6.62px;text-align:right;transform:scaleX(0.885);transform-origin:100% 50%;">USD</div>
<div class="a lnk" style="left:45px;top:451.61px;height:12px;line-height:12px;font-size:6.62px;">10000005</div>
<div class="a " style="left:103.5px;top:451.61px;height:12px;line-height:12px;font-size:6.62px;">10</div>
<div class="a " style="left:133.7px;top:451.61px;height:12px;line-height:12px;font-size:6.58px;">Inlandslieferant DE 1 (10300001)</div>
<div class="a " style="left:286.5px;top:451.61px;height:12px;line-height:12px;font-size:6.62px;">Group 003 (003)</div>
<div class="a " style="right:532.5px;top:451.61px;height:12px;line-height:12px;font-size:6.62px;text-align:right;">21.03.2022</div>
<div class="a " style="right:474px;top:451.61px;height:12px;line-height:12px;font-size:6.62px;text-align:right;">2</div>
<div class="a " style="right:441.5px;top:451.61px;height:12px;line-height:12px;font-size:6.62px;text-align:right;transform:scaleX(0.885);transform-origin:100% 50%;">PC</div>
<div class="a " style="right:366.5px;top:451.61px;height:12px;line-height:12px;font-size:6.62px;text-align:right;">373,86</div>
<div class="a " style="right:343px;top:451.61px;height:12px;line-height:12px;font-size:6.62px;text-align:right;transform:scaleX(0.885);transform-origin:100% 50%;">USD</div>
<div class="a " style="right:281.5px;top:451.61px;height:12px;line-height:12px;font-size:6.62px;text-align:right;">186,93</div>
<div class="a " style="right:258px;top:451.61px;height:12px;line-height:12px;font-size:6.62px;text-align:right;transform:scaleX(0.885);transform-origin:100% 50%;">USD</div>
<div class="a " style="right:200.5px;top:451.61px;height:12px;line-height:12px;font-size:6.62px;text-align:right;">2</div>
<div class="a " style="right:167.5px;top:451.61px;height:12px;line-height:12px;font-size:6.62px;text-align:right;transform:scaleX(0.885);transform-origin:100% 50%;">PC</div>
<div class="a " style="right:93px;top:451.61px;height:12px;line-height:12px;font-size:6.62px;text-align:right;">373,86</div>
<div class="a " style="right:69.5px;top:451.61px;height:12px;line-height:12px;font-size:6.62px;text-align:right;transform:scaleX(0.885);transform-origin:100% 50%;">USD</div>
<div class="a lnk" style="left:45px;top:463.43px;height:12px;line-height:12px;font-size:6.62px;">10000006</div>
<div class="a " style="left:103.5px;top:463.43px;height:12px;line-height:12px;font-size:6.62px;">10</div>
<div class="a " style="left:133.7px;top:463.43px;height:12px;line-height:12px;font-size:6.58px;">Inlandslieferant DE 1 (10300001)</div>
<div class="a " style="left:286.5px;top:463.43px;height:12px;line-height:12px;font-size:6.62px;">Transportation Srv (005)</div>
<div class="a " style="right:532.5px;top:463.43px;height:12px;line-height:12px;font-size:6.62px;text-align:right;">21.03.2022</div>
<div class="a " style="right:474px;top:463.43px;height:12px;line-height:12px;font-size:6.62px;text-align:right;">2</div>
<div class="a " style="right:441.5px;top:463.43px;height:12px;line-height:12px;font-size:6.62px;text-align:right;transform:scaleX(0.885);transform-origin:100% 50%;">PC</div>
<div class="a " style="right:366.5px;top:463.43px;height:12px;line-height:12px;font-size:6.62px;text-align:right;">373,86</div>
<div class="a " style="right:343px;top:463.43px;height:12px;line-height:12px;font-size:6.62px;text-align:right;transform:scaleX(0.885);transform-origin:100% 50%;">USD</div>
<div class="a " style="right:281.5px;top:463.43px;height:12px;line-height:12px;font-size:6.62px;text-align:right;">186,93</div>
<div class="a " style="right:258px;top:463.43px;height:12px;line-height:12px;font-size:6.62px;text-align:right;transform:scaleX(0.885);transform-origin:100% 50%;">USD</div>
<div class="a " style="right:200.5px;top:463.43px;height:12px;line-height:12px;font-size:6.62px;text-align:right;">2</div>
<div class="a " style="right:167.5px;top:463.43px;height:12px;line-height:12px;font-size:6.62px;text-align:right;transform:scaleX(0.885);transform-origin:100% 50%;">PC</div>
<div class="a " style="right:93px;top:463.43px;height:12px;line-height:12px;font-size:6.62px;text-align:right;">373,86</div>
<div class="a " style="right:69.5px;top:463.43px;height:12px;line-height:12px;font-size:6.62px;text-align:right;transform:scaleX(0.885);transform-origin:100% 50%;">USD</div>
<div class="a lnk" style="left:45px;top:475.25px;height:12px;line-height:12px;font-size:6.62px;">10000007</div>
<div class="a " style="left:103.5px;top:475.25px;height:12px;line-height:12px;font-size:6.62px;">10</div>
<div class="a " style="left:133.7px;top:475.25px;height:12px;line-height:12px;font-size:6.58px;">Inlandslieferant DE 1 (10300001)</div>
<div class="a " style="left:286.5px;top:475.25px;height:12px;line-height:12px;font-size:6.62px;">Transportation Srv (005)</div>
<div class="a " style="right:532.5px;top:475.25px;height:12px;line-height:12px;font-size:6.62px;text-align:right;">21.03.2022</div>
<div class="a " style="right:474px;top:475.25px;height:12px;line-height:12px;font-size:6.62px;text-align:right;">2</div>
<div class="a " style="right:441.5px;top:475.25px;height:12px;line-height:12px;font-size:6.62px;text-align:right;transform:scaleX(0.885);transform-origin:100% 50%;">PC</div>
<div class="a " style="right:366.5px;top:475.25px;height:12px;line-height:12px;font-size:6.62px;text-align:right;">373,86</div>
<div class="a " style="right:343px;top:475.25px;height:12px;line-height:12px;font-size:6.62px;text-align:right;transform:scaleX(0.885);transform-origin:100% 50%;">USD</div>
<div class="a " style="right:281.5px;top:475.25px;height:12px;line-height:12px;font-size:6.62px;text-align:right;">186,93</div>
<div class="a " style="right:258px;top:475.25px;height:12px;line-height:12px;font-size:6.62px;text-align:right;transform:scaleX(0.885);transform-origin:100% 50%;">USD</div>
<div class="a " style="right:200.5px;top:475.25px;height:12px;line-height:12px;font-size:6.62px;text-align:right;">2</div>
<div class="a " style="right:167.5px;top:475.25px;height:12px;line-height:12px;font-size:6.62px;text-align:right;transform:scaleX(0.885);transform-origin:100% 50%;">PC</div>
<div class="a " style="right:93px;top:475.25px;height:12px;line-height:12px;font-size:6.62px;text-align:right;">373,86</div>
<div class="a " style="right:69.5px;top:475.25px;height:12px;line-height:12px;font-size:6.62px;text-align:right;transform:scaleX(0.885);transform-origin:100% 50%;">USD</div>
<div class="a lnk" style="left:45px;top:487.07px;height:12px;line-height:12px;font-size:6.62px;">10000008</div>
<div class="a " style="left:103.5px;top:487.07px;height:12px;line-height:12px;font-size:6.62px;">10</div>
<div class="a " style="left:133.7px;top:487.07px;height:12px;line-height:12px;font-size:6.58px;">Inlandslieferant DE 1 (10300001)</div>
<div class="a " style="left:286.5px;top:487.07px;height:12px;line-height:12px;font-size:6.62px;">Group 001 (001)</div>
<div class="a " style="right:532.5px;top:487.07px;height:12px;line-height:12px;font-size:6.62px;text-align:right;">17.03.2022</div>
<div class="a " style="right:474px;top:487.07px;height:12px;line-height:12px;font-size:6.62px;text-align:right;">11</div>
<div class="a " style="right:441.5px;top:487.07px;height:12px;line-height:12px;font-size:6.62px;text-align:right;transform:scaleX(0.885);transform-origin:100% 50%;">PC</div>
<div class="a " style="right:366.5px;top:487.07px;height:12px;line-height:12px;font-size:6.62px;text-align:right;">3.322,00</div>
<div class="a " style="right:343px;top:487.07px;height:12px;line-height:12px;font-size:6.62px;text-align:right;transform:scaleX(0.885);transform-origin:100% 50%;">USD</div>
<div class="a " style="right:281.5px;top:487.07px;height:12px;line-height:12px;font-size:6.62px;text-align:right;">302,00</div>
<div class="a " style="right:258px;top:487.07px;height:12px;line-height:12px;font-size:6.62px;text-align:right;transform:scaleX(0.885);transform-origin:100% 50%;">USD</div>
<div class="a " style="right:200.5px;top:487.07px;height:12px;line-height:12px;font-size:6.62px;text-align:right;">11</div>
<div class="a " style="right:167.5px;top:487.07px;height:12px;line-height:12px;font-size:6.62px;text-align:right;transform:scaleX(0.885);transform-origin:100% 50%;">PC</div>
<div class="a " style="right:93px;top:487.07px;height:12px;line-height:12px;font-size:6.62px;text-align:right;">3.322,00</div>
<div class="a " style="right:69.5px;top:487.07px;height:12px;line-height:12px;font-size:6.62px;text-align:right;transform:scaleX(0.885);transform-origin:100% 50%;">USD</div>
<div class="a lnk" style="left:45px;top:498.89px;height:12px;line-height:12px;font-size:6.62px;">10000009</div>
<div class="a " style="left:103.5px;top:498.89px;height:12px;line-height:12px;font-size:6.62px;">10</div>
<div class="a " style="left:133.7px;top:498.89px;height:12px;line-height:12px;font-size:6.58px;">Inlandslieferant DE 1 (10300001)</div>
<div class="a " style="left:286.5px;top:498.89px;height:12px;line-height:12px;font-size:6.62px;">Transportation Srv (005)</div>
<div class="a " style="right:532.5px;top:498.89px;height:12px;line-height:12px;font-size:6.62px;text-align:right;">23.03.2022</div>
<div class="a " style="right:474px;top:498.89px;height:12px;line-height:12px;font-size:6.62px;text-align:right;">2</div>
<div class="a " style="right:441.5px;top:498.89px;height:12px;line-height:12px;font-size:6.62px;text-align:right;transform:scaleX(0.885);transform-origin:100% 50%;">PC</div>
<div class="a " style="right:366.5px;top:498.89px;height:12px;line-height:12px;font-size:6.62px;text-align:right;">373,86</div>
<div class="a " style="right:343px;top:498.89px;height:12px;line-height:12px;font-size:6.62px;text-align:right;transform:scaleX(0.885);transform-origin:100% 50%;">USD</div>
<div class="a " style="right:281.5px;top:498.89px;height:12px;line-height:12px;font-size:6.62px;text-align:right;">186,93</div>
<div class="a " style="right:258px;top:498.89px;height:12px;line-height:12px;font-size:6.62px;text-align:right;transform:scaleX(0.885);transform-origin:100% 50%;">USD</div>
<div class="a " style="right:200.5px;top:498.89px;height:12px;line-height:12px;font-size:6.62px;text-align:right;">2</div>
<div class="a " style="right:167.5px;top:498.89px;height:12px;line-height:12px;font-size:6.62px;text-align:right;transform:scaleX(0.885);transform-origin:100% 50%;">PC</div>
<div class="a " style="right:93px;top:498.89px;height:12px;line-height:12px;font-size:6.62px;text-align:right;">373,86</div>
<div class="a " style="right:69.5px;top:498.89px;height:12px;line-height:12px;font-size:6.62px;text-align:right;transform:scaleX(0.885);transform-origin:100% 50%;">USD</div>
<div class="a lnk" style="left:45px;top:510.71px;height:12px;line-height:12px;font-size:6.62px;">10000010</div>
<div class="a " style="left:103.5px;top:510.71px;height:12px;line-height:12px;font-size:6.62px;">10</div>
<div class="a " style="left:133.7px;top:510.71px;height:12px;line-height:12px;font-size:6.58px;">Inlandslieferant DE 1 (10300001)</div>
<div class="a " style="left:286.5px;top:510.71px;height:12px;line-height:12px;font-size:6.62px;">Group 001 (001)</div>
<div class="a " style="right:532.5px;top:510.71px;height:12px;line-height:12px;font-size:6.62px;text-align:right;">16.03.2022</div>
<div class="a " style="right:474px;top:510.71px;height:12px;line-height:12px;font-size:6.62px;text-align:right;">1</div>
<div class="a " style="right:441.5px;top:510.71px;height:12px;line-height:12px;font-size:6.62px;text-align:right;transform:scaleX(0.885);transform-origin:100% 50%;">PC</div>
<div class="a " style="right:366.5px;top:510.71px;height:12px;line-height:12px;font-size:6.62px;text-align:right;">484,00</div>
<div class="a " style="right:343px;top:510.71px;height:12px;line-height:12px;font-size:6.62px;text-align:right;transform:scaleX(0.885);transform-origin:100% 50%;">USD</div>
<div class="a " style="right:281.5px;top:510.71px;height:12px;line-height:12px;font-size:6.62px;text-align:right;">484,00</div>
<div class="a " style="right:258px;top:510.71px;height:12px;line-height:12px;font-size:6.62px;text-align:right;transform:scaleX(0.885);transform-origin:100% 50%;">USD</div>
<div class="a " style="right:200.5px;top:510.71px;height:12px;line-height:12px;font-size:6.62px;text-align:right;">1</div>
<div class="a " style="right:167.5px;top:510.71px;height:12px;line-height:12px;font-size:6.62px;text-align:right;transform:scaleX(0.885);transform-origin:100% 50%;">PC</div>
<div class="a " style="right:93px;top:510.71px;height:12px;line-height:12px;font-size:6.62px;text-align:right;">484,00</div>
<div class="a " style="right:69.5px;top:510.71px;height:12px;line-height:12px;font-size:6.62px;text-align:right;transform:scaleX(0.885);transform-origin:100% 50%;">USD</div>
<div class="a b" style="right:366.5px;top:522.60px;height:12px;line-height:12px;font-size:6.72px;text-align:right;">1.112.923.991.008,31</div>
<div class="a b" style="right:343px;top:522.60px;height:12px;line-height:12px;font-size:6.60px;text-align:right;transform:scaleX(0.860);transform-origin:100% 50%;">USD</div>
<div class="a b" style="right:93px;top:522.60px;height:12px;line-height:12px;font-size:6.72px;text-align:right;">1.112.923.951.455,14</div>
<div class="a b" style="right:69.5px;top:522.60px;height:12px;line-height:12px;font-size:6.60px;text-align:right;transform:scaleX(0.860);transform-origin:100% 50%;">USD</div>
<div class="a" style="left:969px;top:233px;width:1px;height:5px;background:#556b82"></div>
</div></body></html>
